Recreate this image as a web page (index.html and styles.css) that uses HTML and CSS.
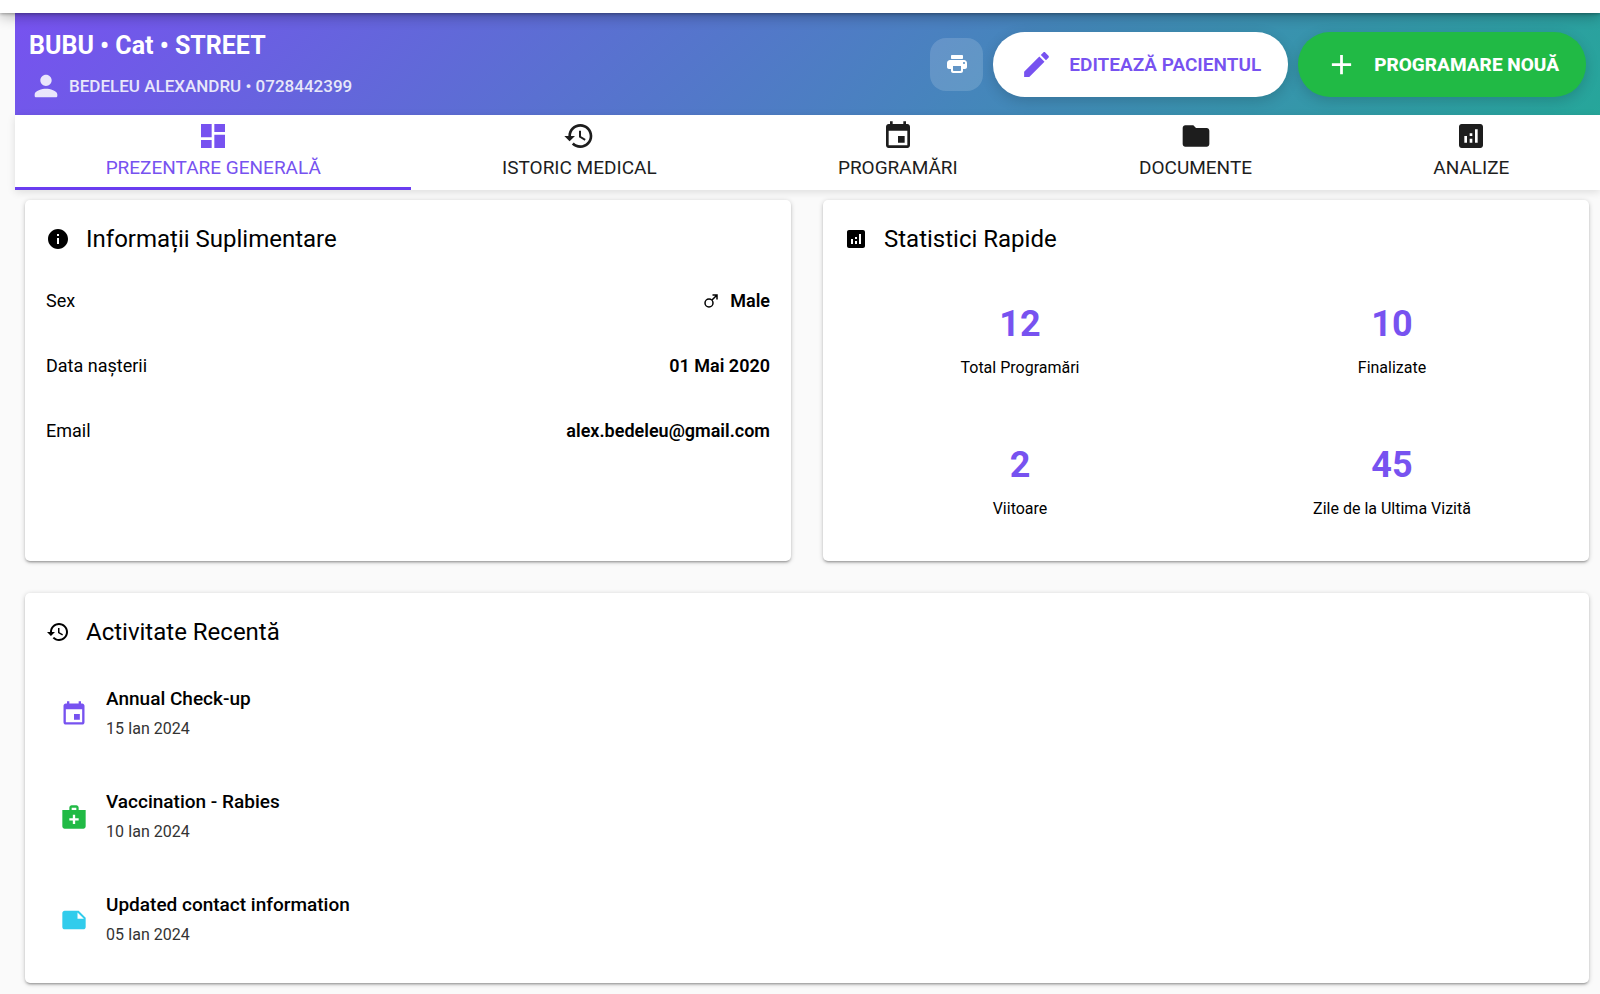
FILE: index.html
```html
<!DOCTYPE html>
<html lang="ro">
<head>
  <meta charset="UTF-8" />
  <meta name="viewport" content="width=device-width, initial-scale=1.0" />
  <title>BUBU - Pacient</title>
  <link rel="stylesheet" href="styles.css">
</head>
<body>
  <div class="top-bar"></div>

  <main class="page">
    <header class="patient-header">
      <div class="patient-info">
        <h1>BUBU • Cat • STREET</h1>
        <div class="owner">
          <svg class="owner-icon" viewBox="0 0 24 24"><path d="M12 12c2.21 0 4-1.79 4-4s-1.79-4-4-4-4 1.79-4 4 1.79 4 4 4zm0 2c-2.67 0-8 1.34-8 4v1c0 .55.45 1 1 1h14c.55 0 1-.45 1-1v-1c0-2.66-5.33-4-8-4z"/></svg>
          <span>BEDELEU ALEXANDRU • 0728442399</span>
        </div>
      </div>
      <div class="actions">
        <button class="btn-print" aria-label="Printează">
          <svg viewBox="0 0 24 24"><path d="M19 8H5c-1.660 0-3 1.340-3 3v4c0 1.100.9 2 2 2h2v2c0 1.100.9 2 2 2h8c1.100 0 2-.9 2-2v-2h2c1.100 0 2-.9 2-2v-4c0-1.660-1.340-3-3-3zm-4 11H9c-.55 0-1-.45-1-1v-4h8v4c0 .55-.45 1-1 1zm4-7c-.55 0-1-.45-1-1s.45-1 1-1 1 .45 1 1-.45 1-1 1zm-2-9H7c-.55 0-1 .45-1 1v2c0 .55.45 1 1 1h10c.55 0 1-.45 1-1V4c0-.55-.45-1-1-1z"/></svg>
        </button>
        <button class="btn btn-edit">
          <svg viewBox="0 0 24 24"><path d="M3 17.25V21h3.750L17.810 9.940l-3.750-3.750L3 17.250zM20.710 7.040c.39-.39.39-1.020 0-1.410l-2.340-2.340c-.39-.39-1.020-.39-1.410 0l-1.830 1.830 3.750 3.750 1.830-1.830z"/></svg>
          Editează pacientul
        </button>
        <button class="btn btn-new">
          <svg viewBox="0 0 24 24"><path d="M19 13h-6v6h-2v-6H5v-2h6V5h2v6h6v2z"/></svg>
          Programare nouă
        </button>
      </div>
    </header>

    <nav class="tabs">
      <a href="#general" class="tab active">
        <svg viewBox="0 0 24 24"><path d="M3 13h8V3H3v10zm0 8h8v-6H3v6zm10 0h8V11h-8v10zm0-18v6h8V3h-8z"/></svg>
        Prezentare generală
      </a>
      <a href="#istoric" class="tab">
        <svg viewBox="0 0 24 24"><path d="M13 3c-4.970 0-9 4.030-9 9H1l3.890 3.890.07.14L9 12H6c0-3.870 3.130-7 7-7s7 3.130 7 7-3.130 7-7 7c-1.930 0-3.680-.79-4.940-2.060l-1.420 1.420C8.270 19.990 10.510 21 13 21c4.970 0 9-4.030 9-9s-4.030-9-9-9zm-1 5v5l4.280 2.540.72-1.210-3.500-2.080V8H12z"/></svg>
        Istoric medical
      </a>
      <a href="#programari" class="tab">
        <svg viewBox="0 0 24 24"><path d="M17 12h-5v5h5v-5zM16 1v2H8V1H6v2H5c-1.110 0-1.990.9-1.990 2L3 19c0 1.100.89 2 2 2h14c1.100 0 2-.9 2-2V5c0-1.100-.9-2-2-2h-1V1h-2zm3 18H5V8h14v11z"/></svg>
        Programări
      </a>
      <a href="#documente" class="tab">
        <svg viewBox="0 0 24 24"><path d="M10 4H4c-1.100 0-1.990.9-1.990 2L2 18c0 1.100.9 2 2 2h16c1.100 0 2-.9 2-2V8c0-1.100-.9-2-2-2h-8l-2-2z"/></svg>
        Documente
      </a>
      <a href="#analize" class="tab">
        <svg viewBox="0 0 24 24"><path fill-rule="evenodd" d="M19 3H5c-1.100 0-2 .9-2 2v14c0 1.100.9 2 2 2h14c1.100 0 2-.9 2-2V5c0-1.100-.9-2-2-2zM9 17H7v-5h2v5zm4 0h-2v-3h2v3zm0-5h-2v-2h2v2zm4 5h-2V7h2v10z"/></svg>
        Analize
      </a>
    </nav>

    <div class="cards">
      <section class="card">
        <h2>
          <svg viewBox="0 0 24 24"><path d="M12 2C6.480 2 2 6.480 2 12s4.480 10 10 10 10-4.480 10-10S17.520 2 12 2zm1 15h-2v-6h2v6zm0-8h-2V7h2v2z"/></svg>
          Informații Suplimentare
        </h2>
        <dl class="info-list">
          <div class="info-row">
            <dt>Sex</dt>
            <dd>
              <svg class="male-icon" viewBox="0 0 14 14"><circle cx="5" cy="9" r="4"/><path d="M8 6l5-5M8.500 1H13v4.500"/></svg>
              Male
            </dd>
          </div>
          <div class="info-row">
            <dt>Data nașterii</dt>
            <dd>01 Mai 2020</dd>
          </div>
          <div class="info-row">
            <dt>Email</dt>
            <dd>alex.bedeleu@gmail.com</dd>
          </div>
        </dl>
      </section>

      <section class="card">
        <h2>
          <svg viewBox="0 0 24 24"><path fill-rule="evenodd" d="M19 3H5c-1.100 0-2 .9-2 2v14c0 1.100.9 2 2 2h14c1.100 0 2-.9 2-2V5c0-1.100-.9-2-2-2zM9 17H7v-5h2v5zm4 0h-2v-3h2v3zm0-5h-2v-2h2v2zm4 5h-2V7h2v10z"/></svg>
          Statistici Rapide
        </h2>
        <div class="stats">
          <div class="stat">
            <div class="stat-value">12</div>
            <div class="stat-label">Total Programări</div>
          </div>
          <div class="stat">
            <div class="stat-value">10</div>
            <div class="stat-label">Finalizate</div>
          </div>
          <div class="stat">
            <div class="stat-value">2</div>
            <div class="stat-label">Viitoare</div>
          </div>
          <div class="stat">
            <div class="stat-value">45</div>
            <div class="stat-label">Zile de la Ultima Vizită</div>
          </div>
        </div>
      </section>

      <section class="card card-wide">
        <h2>
          <svg viewBox="0 0 24 24"><path d="M13 3c-4.970 0-9 4.030-9 9H1l3.890 3.890.07.14L9 12H6c0-3.870 3.130-7 7-7s7 3.130 7 7-3.130 7-7 7c-1.930 0-3.680-.79-4.940-2.060l-1.420 1.420C8.270 19.990 10.510 21 13 21c4.970 0 9-4.030 9-9s-4.030-9-9-9zm-1 5v5l4.280 2.540.72-1.210-3.500-2.080V8H12z"/></svg>
          Activitate Recentă
        </h2>
        <ul class="activity">
          <li>
            <svg class="purple" viewBox="0 0 24 24"><path d="M17 12h-5v5h5v-5zM16 1v2H8V1H6v2H5c-1.110 0-1.990.9-1.990 2L3 19c0 1.100.89 2 2 2h14c1.100 0 2-.9 2-2V5c0-1.100-.9-2-2-2h-1V1h-2zm3 18H5V8h14v11z"/></svg>
            <div>
              <p class="activity-title">Annual Check-up</p>
              <p class="activity-date">15 Ian 2024</p>
            </div>
          </li>
          <li>
            <svg class="green" viewBox="0 0 24 24"><path fill-rule="evenodd" d="M22 6h-6V4c0-1.100-.9-2-2-2h-4c-1.100 0-2 .9-2 2v2H2v14c0 1.100.9 2 2 2h16c1.100 0 2-.9 2-2V6zM10 4h4v2h-4V4zm6 11h-3v3h-2v-3H8v-2h3v-3h2v3h3v2z"/></svg>
            <div>
              <p class="activity-title">Vaccination - Rabies</p>
              <p class="activity-date">10 Ian 2024</p>
            </div>
          </li>
          <li>
            <svg class="cyan" viewBox="0 0 24 24"><path d="M22 10l-6-6H4c-1.100 0-2 .9-2 2v12.010c0 1.100.9 1.990 2 1.990l16-.01c1.100 0 2-.89 2-1.990v-8zm-7-4.500l5.500 5.500H15V5.500z"/></svg>
            <div>
              <p class="activity-title">Updated contact information</p>
              <p class="activity-date">05 Ian 2024</p>
            </div>
          </li>
        </ul>
      </section>
    </div>
  </main>
</body>
</html>
```
FILE: styles.css
```css
* {
  box-sizing: border-box;
}

body {
  font-family: Roboto, sans-serif;
  background-color: #fafafa;
  color: #000000;
  font-size: 18px;
  line-height: 28px;
  margin: 0;
}

h1, h2, p, dl, dd, ul {
  margin: 0;
  padding: 0;
}

svg {
  fill: currentColor;
  flex: none;
}

.top-bar {
  position: relative;
  z-index: 1;
  height: 13px;
  background: #ffffff;
  box-shadow: 0 1px 3px rgba(0, 0, 0, 0.3), 0 3px 14px rgba(0, 0, 0, 0.3);
}

.page {
  padding-left: 15px;
}

.patient-header {
  display: flex;
  justify-content: space-between;
  height: 102px;
  padding: 16px 14px 0;
  background: linear-gradient(135deg, #7752f0, #26a69a);
  color: #ffffff;
}

.patient-info h1 {
  font-size: 25px;
  font-weight: 700;
  line-height: 34px;
}

.owner {
  display: flex;
  align-items: center;
  gap: 6px;
  margin-top: 6px;
  font-size: 17px;
  font-weight: 500;
  opacity: 0.85;
}

.owner-icon {
  width: 34px;
  height: 34px;
}

.actions {
  display: flex;
  align-items: center;
  gap: 10px;
  height: 70px;
}

.btn-print {
  display: flex;
  align-items: center;
  justify-content: center;
  width: 53px;
  height: 53px;
  padding: 0;
  border: none;
  border-radius: 16px;
  background: rgba(255, 255, 255, 0.15);
  color: #ffffff;
  cursor: pointer;
}

.btn-print svg {
  width: 24px;
  height: 24px;
}

.btn {
  display: flex;
  align-items: center;
  gap: 16px;
  height: 65px;
  padding: 0 27px;
  border: none;
  border-radius: 32px;
  font-family: inherit;
  font-size: 19px;
  text-transform: uppercase;
  box-shadow: 0 4px 14px rgba(0, 0, 0, 0.16);
  cursor: pointer;
}

.btn svg {
  width: 33px;
  height: 33px;
}

.btn-edit {
  background: #ffffff;
  color: #7752f0;
  font-weight: 600;
}

.btn-new {
  background: #21ba45;
  color: #ffffff;
  font-weight: 800;
}

.tabs {
  display: flex;
  background: #ffffff;
  box-shadow: 0 2px 8px rgba(0, 0, 0, 0.12);
}

.tab {
  display: flex;
  flex: 1 1 auto;
  flex-direction: column;
  align-items: center;
  height: 75px;
  padding-top: 5px;
  color: #1d1d1d;
  font-size: 19px;
  line-height: 32px;
  text-decoration: none;
  text-transform: uppercase;
}

.tab svg {
  width: 32px;
  height: 32px;
}

.tab.active {
  border-bottom: 3px solid #6a3df0;
  color: #7752f0;
}

.cards {
  display: grid;
  grid-template-columns: 1fr 1fr;
  gap: 32px;
  padding: 10px 11px 10px 10px;
}

.card {
  min-height: 361px;
  padding: 20px 21px 12px;
  background: #ffffff;
  border-radius: 5px;
  box-shadow: 0 1px 5px rgba(0, 0, 0, 0.2), 0 2px 2px rgba(0, 0, 0, 0.14), 0 3px 1px -2px rgba(0, 0, 0, 0.12);
}

.card-wide {
  grid-column: 1 / -1;
}

.card h2 {
  display: flex;
  align-items: center;
  gap: 16px;
  font-size: 24px;
  font-weight: 400;
  line-height: 38px;
}

.card h2 svg {
  width: 24px;
  height: 24px;
}

.info-list {
  margin-top: 10px;
}

.info-row {
  display: flex;
  align-items: center;
  justify-content: space-between;
  height: 65px;
}

.info-row dd {
  display: flex;
  align-items: center;
  gap: 12px;
  font-weight: 600;
}

.male-icon {
  width: 14px;
  height: 14px;
  fill: none;
  stroke: #000000;
  stroke-width: 1.5;
}

.stats {
  display: grid;
  grid-template-columns: 1fr 1fr;
  gap: 20px;
  margin-top: 20px;
}

.stat {
  height: 121px;
  padding-top: 20px;
  text-align: center;
}

.stat-value {
  color: #7752f0;
  font-size: 36px;
  font-weight: 700;
  line-height: 52px;
}

.stat-label {
  font-size: 16px;
  line-height: 36px;
}

.activity {
  margin-top: 11px;
  list-style: none;
}

.activity li {
  display: flex;
  align-items: center;
  gap: 18px;
  height: 103px;
  padding-left: 14px;
}

.activity svg {
  width: 28px;
  height: 28px;
}

.activity-title {
  font-size: 19px;
  font-weight: 500;
  line-height: 30px;
}

.activity-date {
  color: #333333;
  font-size: 16px;
  line-height: 30px;
}

.purple {
  color: #7752f0;
}

.green {
  color: #21ba45;
}

.cyan {
  color: #31ccec;
}
```
